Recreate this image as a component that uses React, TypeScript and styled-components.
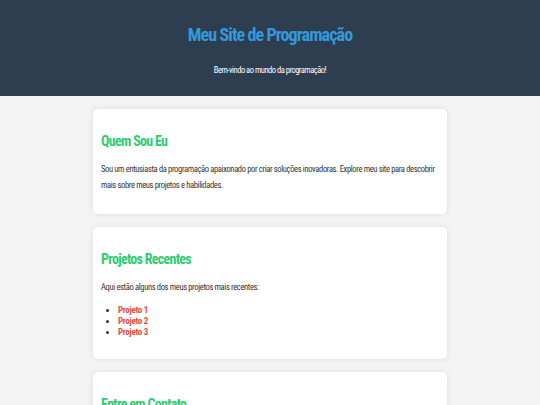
import styled, { createGlobalStyle } from 'styled-components'

const GlobalStyle = createGlobalStyle`
  * {
    box-sizing: border-box;
  }

  body {
    margin: 0;
    background-color: #f4f4f4;
    font-family: 'Roboto Condensed', 'Liberation Sans', Arial, sans-serif;
    color: #333;
  }
`

const projects = ['Projeto 1', 'Projeto 2', 'Projeto 3']

const App = () => (
  <>
    <GlobalStyle />
    <Header>
      <SiteTitle>Meu Site de Programação</SiteTitle>
      <Tagline>Bem-vindo ao mundo da programação!</Tagline>
    </Header>
    <Main>
      <Card>
        <CardTitle>Quem Sou Eu</CardTitle>
        <Text>
          Sou um entusiasta da programação apaixonado por criar soluções inovadoras. Explore meu site para descobrir
          mais sobre meus projetos e habilidades.
        </Text>
      </Card>
      <Card>
        <CardTitle>Projetos Recentes</CardTitle>
        <Text>Aqui estão alguns dos meus projetos mais recentes:</Text>
        <ProjectList>
          {projects.map((name) => (
            <li key={name}>
              <ProjectLink href="#">{name}</ProjectLink>
            </li>
          ))}
        </ProjectList>
      </Card>
      <Card>
        <CardTitle>Entre em Contato</CardTitle>
        <Text>Envie uma mensagem para saber mais sobre o meu trabalho.</Text>
      </Card>
    </Main>
  </>
)

export default App

const Header = styled.header`
  background-color: #2c3e50;
  height: 96px;
  display: flex;
  flex-direction: column;
  align-items: center;
  padding-top: 24px;
`

const SiteTitle = styled.h1`
  margin: 0;
  color: #3498db;
  font-size: 18px;
  font-weight: 700;
  line-height: 22px;
  letter-spacing: -0.9px;
`

const Tagline = styled.p`
  margin: 18px 0 0;
  color: #fff;
  font-size: 8.5px;
  line-height: 12px;
  letter-spacing: -0.5px;
`

const Main = styled.main`
  width: 354px;
  margin: 13px auto 0;
  display: flex;
  flex-direction: column;
  gap: 13px;
`

const Card = styled.section`
  background-color: #fff;
  border-radius: 5px;
  box-shadow: 0 0 6px rgba(0, 0, 0, 0.1);
  padding: 23px 8px 21px;
`

const CardTitle = styled.h2`
  margin: 0 0 11px;
  color: #2ecc71;
  font-size: 14px;
  font-weight: 700;
  line-height: 18px;
  letter-spacing: -0.7px;
`

const Text = styled.p`
  margin: 0;
  font-size: 8.5px;
  line-height: 16px;
  letter-spacing: -0.35px;
`

const ProjectList = styled.ul`
  margin: 10px 0 0;
  padding-left: 17px;
  font-size: 9px;
  line-height: 11px;
  letter-spacing: -0.3px;
`

const ProjectLink = styled.a`
  color: #e74c3c;
  font-weight: 700;
  text-decoration: none;
`
